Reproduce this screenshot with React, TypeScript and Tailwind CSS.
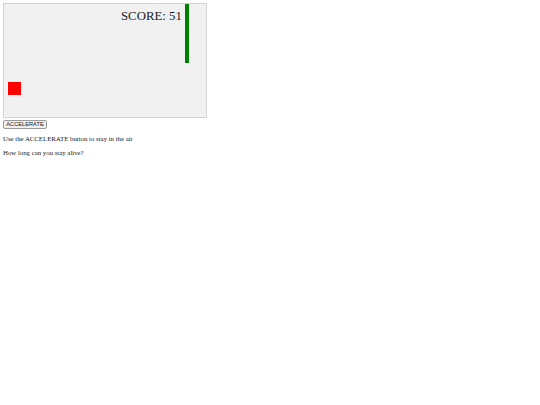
import React from 'react';

const serif = { fontFamily: '"Liberation Serif", "Times New Roman", serif' };

export default function App() {
  return (
    <div className="min-h-[405px] w-[540px] bg-white pl-[3px] pt-[3px]" style={serif}>
      <div className="relative h-[115px] w-[204px] border border-[#d3d3d3] bg-[#f1f1f1]">
        <span className="absolute left-[117px] top-[6px] text-[12.8px] leading-none text-[#222]">SCORE: 51</span>
        <div className="absolute left-[181px] top-0 h-[59px] w-[4px] bg-[#008000]" />
        <div className="absolute left-[4px] top-[78px] h-[13px] w-[13px] bg-[#ff0000]" />
      </div>
      <button
        className="mt-[2px] flex h-[9px] w-[44px] items-center justify-center rounded-[2px] border border-[#9a9a9a] bg-[#efefef] text-[5.7px] leading-none text-[#222]"
        style={{ fontFamily: '"Liberation Sans", Arial, sans-serif' }}
      >
        ACCELERATE
      </button>
      <p className="mt-[6px] text-[6.8px] leading-[8px] text-[#222]">Use the ACCELERATE button to stay in the air</p>
      <p className="mt-[6px] text-[6.8px] leading-[8px] text-[#222]">How long can you stay alive?</p>
    </div>
  );
}
